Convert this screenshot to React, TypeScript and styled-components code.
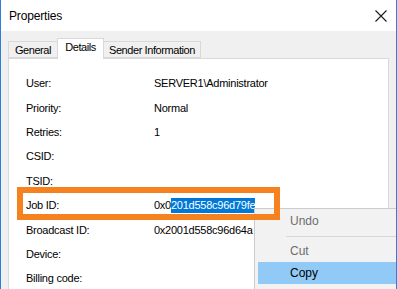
import React from "react";
import styled, { createGlobalStyle } from "styled-components";

const GlobalStyle = createGlobalStyle`
  html, body {
    margin: 0;
    padding: 0;
    overflow: hidden;
    background: #ffffff;
  }
`;

const rows = [
  { label: "User:", value: "SERVER1\\Administrator" },
  { label: "Priority:", value: "Normal" },
  { label: "Retries:", value: "1" },
  { label: "CSID:", value: "" },
  { label: "TSID:", value: "" },
  { label: "Job ID:", value: "0x0", selected: "201d558c96d79fe" },
  { label: "Broadcast ID:", value: "0x2001d558c96d64a" },
  { label: "Device:", value: "" },
  { label: "Billing code:", value: "" },
];

function App() {
  return (
    <>
      <GlobalStyle />
      <Window>
        <TitleBar>
          <Title>Properties</Title>
          <CloseIcon viewBox="0 0 12 12">
            <path d="M0.5 0.5 L11.5 11.5 M11.5 0.5 L0.5 11.5" />
          </CloseIcon>
        </TitleBar>
        <Body>
          <TabStrip>
            <Tab $w={50}>General</Tab>
            <Tab $w={47} $active>
              Details
            </Tab>
            <Tab $w={98}>Sender Information</Tab>
          </TabStrip>
          <Panel>
            {rows.map((r) => (
              <Row key={r.label}>
                <Label>{r.label}</Label>
                <Value>
                  {r.value}
                  {r.selected && <Selection>{r.selected}</Selection>}
                </Value>
              </Row>
            ))}
          </Panel>
        </Body>

        <ContextMenu>
          <MenuItem $disabled>Undo</MenuItem>
          <Separator />
          <MenuItem $disabled>Cut</MenuItem>
          <MenuItem $hover>Copy</MenuItem>
        </ContextMenu>

        <Highlight />
      </Window>
    </>
  );
}

const Window = styled.div`
  position: relative;
  width: 397px;
  height: 289px;
  box-sizing: border-box;
  border-left: 1px solid #2f7fd6;
  border-right: 1px solid #2f7fd6;
  background: #f0f0f0;
  overflow: hidden;
  font-family: "Liberation Sans", Arial, sans-serif;
  color: #000;
`;

const TitleBar = styled.div`
  height: 31px;
  background: #ffffff;
  display: flex;
  align-items: center;
  justify-content: space-between;
  padding: 0 9px 0 8px;
`;

const Title = styled.div`
  font-size: 12px;
  letter-spacing: -0.15px;
  margin-top: 1px;
`;

const CloseIcon = styled.svg`
  width: 12px;
  height: 12px;
  margin-top: 1px;
  fill: none;
  stroke: #1a1a1a;
  stroke-width: 1.1;
`;

const Body = styled.div`
  padding: 7px 7px 0 7px;
`;

const TabStrip = styled.div`
  display: flex;
  align-items: flex-end;
  height: 20px;
  position: relative;
  z-index: 1;
`;

const Tab = styled.div<{ $active?: boolean; $w: number }>`
  box-sizing: border-box;
  width: ${(p) => p.$w}px;
  height: ${(p) => (p.$active ? "21px" : "17px")};
  margin-bottom: ${(p) => (p.$active ? "-1px" : "0")};
  padding-top: ${(p) => (p.$active ? "2px" : "2px")};
  background: ${(p) => (p.$active ? "#ffffff" : "#f0f0f0")};
  border: 1px solid #d9d9d9;
  border-bottom: ${(p) => (p.$active ? "none" : "1px solid #d9d9d9")};
  margin-left: -1px;
  &:first-child {
    margin-left: 0;
  }
  text-align: center;
  font-size: 11px;
  letter-spacing: -0.42px;
  line-height: 13px;
  white-space: nowrap;
`;

const Panel = styled.div`
  background: #ffffff;
  border: 1px solid #d9d9d9;
  height: 260px;
  padding: 12px 0 0 17px;
`;

const Row = styled.div`
  display: flex;
  align-items: center;
  height: 24.4px;
  font-size: 11px;
  letter-spacing: -0.25px;
`;

const Label = styled.div`
  width: 128px;
  flex: none;
`;

const Value = styled.div`
  white-space: nowrap;
`;

const Selection = styled.span`
  background: #0078d7;
  color: #ffffff;
  padding: 1px 0 2px;
`;

const ContextMenu = styled.div`
  position: absolute;
  left: 253px;
  top: 208px;
  width: 160px;
  height: 100px;
  box-sizing: border-box;
  background: #f2f2f2;
  border: 1px solid #cccccc;
  padding: 1px 0 0 3px;
  font-size: 12px;
`;

const MenuItem = styled.div<{ $disabled?: boolean; $hover?: boolean }>`
  height: 22px;
  line-height: 22px;
  padding-left: 32px;
  color: ${(p) => (p.$disabled ? "#6d6d6d" : "#000000")};
  background: ${(p) => (p.$hover ? "#91c9f7" : "transparent")};
`;

const Separator = styled.div`
  height: 1px;
  margin: 4px 0 3px 28px;
  background: #d7d7d7;
`;

const Highlight = styled.div`
  position: absolute;
  left: 16px;
  top: 187px;
  width: 263px;
  height: 33px;
  box-sizing: border-box;
  border: 6px solid #f5821f;
  pointer-events: none;
`;

export default App;
